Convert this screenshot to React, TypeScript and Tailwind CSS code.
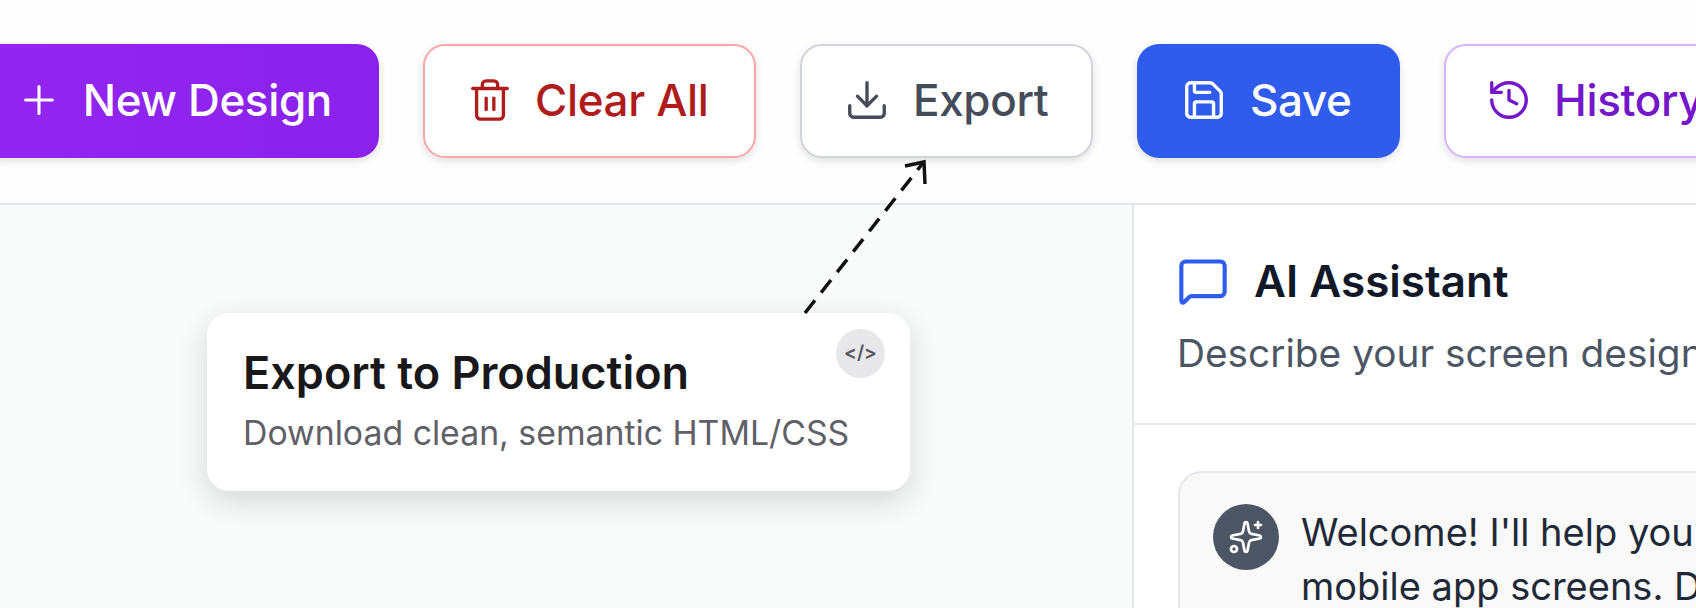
import { Download, History, MessageSquare, Plus, Save, Sparkles, Trash2 } from "lucide-react";

const baseBtn =
  "flex h-[114px] shrink-0 items-center rounded-[22px] pb-[2px] text-[44px] font-medium tracking-[-0.35px] shadow-[0_3px_8px_rgba(0,0,0,0.12)]";

const App = () => {
  return (
    <div className="relative flex h-[608px] w-[1696px] flex-col overflow-hidden bg-[#f9fafa] font-['Inter',sans-serif]">
      <header className="flex h-[205px] shrink-0 items-start gap-[44px] border-b-2 border-[#e5e7eb] bg-[#fefefe] pt-[44px]">
        <button className={`${baseBtn} -ml-[21px] w-[400px] justify-end gap-[21px] bg-gradient-to-r from-[#9326f0] to-[#8a22ec] pr-[47px] text-white`}>
          <Plus size={46} strokeWidth={1.6} />
          New Design
        </button>
        <button className={`${baseBtn} w-[333px] gap-[22px] border-2 border-[#fca5a5] bg-white pl-[42px] text-[#b01c1c]`}>
          <Trash2 size={46} strokeWidth={1.75} />
          Clear All
        </button>
        <button className={`${baseBtn} w-[293px] gap-[23px] border-2 border-[#d1d5db] bg-white pl-[42px] text-[#454c59]`}>
          <Download size={46} strokeWidth={1.75} />
          Export
        </button>
        <button className={`${baseBtn} w-[263px] gap-[23px] bg-[#2f5ced] pl-[44px] text-white`}>
          <Save size={46} strokeWidth={1.75} />
          Save
        </button>
        <button className={`${baseBtn} w-[300px] gap-[22px] border-2 border-[#d8b4fe] bg-white pl-[40px] text-[#7416c9]`}>
          <History size={46} strokeWidth={1.75} />
          History
        </button>
      </header>

      <div className="flex min-h-0 flex-1">
        <main className="flex-1 pt-[108px] pl-[207px]">
          <div className="relative h-[178px] w-[703px] rounded-[22px] bg-white pt-[30px] pl-[36px] shadow-[0_10px_30px_rgba(0,0,0,0.14)]">
            <h3 className="text-[45px] leading-[60px] font-semibold text-[#18181b]">Export to Production</h3>
            <p className="mt-[8px] text-[33.8px] leading-[44px] whitespace-nowrap text-[#5f6068]">
              Download clean, semantic HTML/CSS
            </p>
            <span className="absolute top-[16px] right-[25px] flex h-[49px] w-[49px] items-center justify-center rounded-full bg-[#e8e8ea] text-[19px] font-semibold text-[#55555c]">
              &lt;/&gt;
            </span>
          </div>
        </main>

        <aside className="flex w-[564px] shrink-0 flex-col border-l-2 border-[#e5e7eb] bg-white">
          <div className="h-[220px] shrink-0 border-b-2 border-[#e5e7eb] pt-[48px] pl-[43px]">
            <div className="flex items-center gap-[25px]">
              <MessageSquare size={52} strokeWidth={1.9} className="text-[#2f5ced]" />
              <h2 className="text-[44px] leading-[56px] font-semibold text-[#111827]">AI Assistant</h2>
            </div>
            <p className="mt-[18px] text-[38.8px] leading-[52px] whitespace-nowrap text-[#4b5563]">
              Describe your screen design
            </p>
          </div>
          <div className="flex-1 pt-[46px] pl-[44px]">
            <div className="flex h-[300px] w-[700px] gap-[22px] rounded-tl-[24px] border-2 border-[#e5e7eb] bg-[#f9f9fa] pt-[32px] pl-[33px]">
              <span className="-mt-[1px] flex h-[66px] w-[66px] shrink-0 items-center justify-center rounded-full bg-[#4b5563] text-white">
                <Sparkles size={36} strokeWidth={1.8} />
              </span>
              <p className="text-[38px] leading-[54px] whitespace-nowrap text-[#1f2937]">
                Welcome! I'll help you create beautiful
                <br />
                mobile app screens. Describe your idea
              </p>
            </div>
          </div>
        </aside>
      </div>

      {/* dashed pointer from the card up to Export */}
      <svg className="absolute top-0 left-0" width="1696" height="320" fill="none">
        <path d="M805 313 L923 163" stroke="#111" strokeWidth="3.5" strokeDasharray="16 10" />
        <path d="M905 166 L924 162 L925 184" stroke="#111" strokeWidth="3.5" />
      </svg>
    </div>
  );
};

export default App;
